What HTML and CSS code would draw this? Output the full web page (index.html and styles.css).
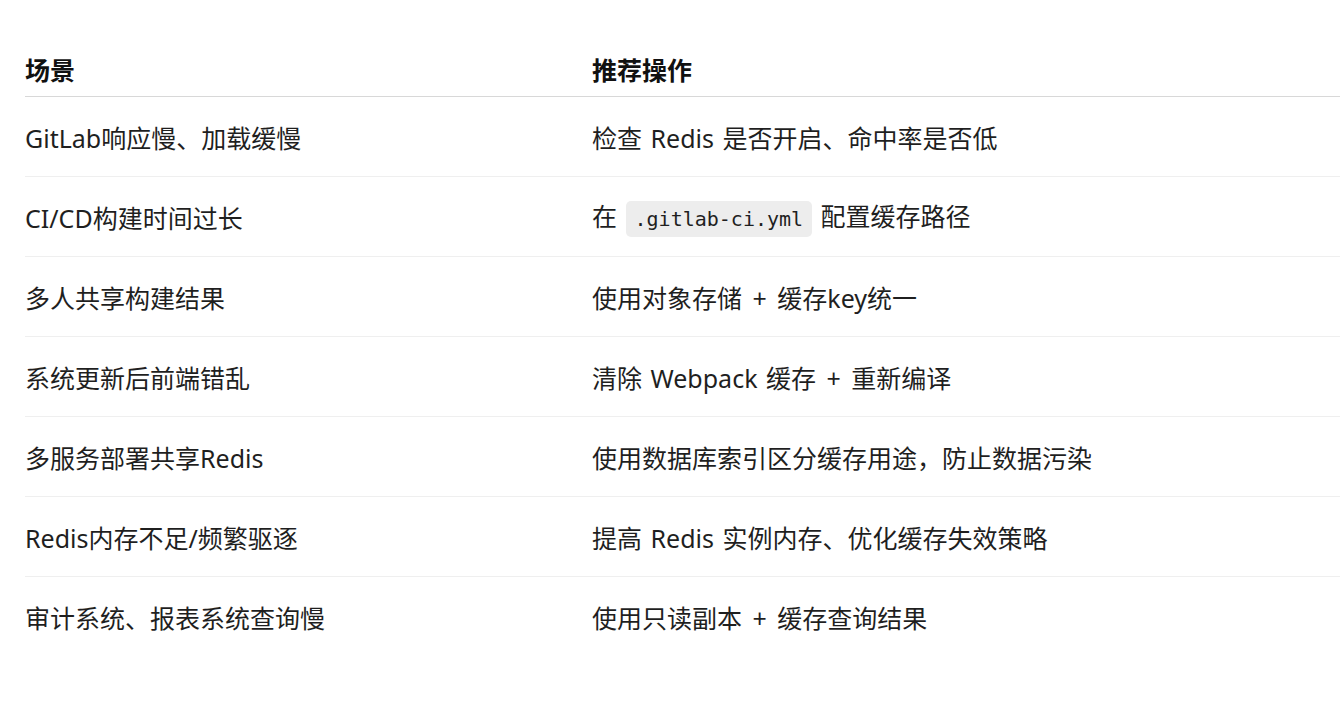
FILE: index.html
```html
<!DOCTYPE html>
<html lang="zh-CN">
<head>
<meta charset="utf-8">
<title>缓存场景</title>
<link rel="stylesheet" href="styles.css">
</head>
<body>
<div class="page">
  <table class="tbl">
    <colgroup>
      <col class="c1">
      <col class="c2">
    </colgroup>
    <thead>
      <tr>
        <th>场景</th>
        <th>推荐操作</th>
      </tr>
    </thead>
    <tbody>
      <tr><td>GitLab响应慢、加载缓慢</td><td>检查 Redis 是否开启、命中率是否低</td></tr>
      <tr><td>CI/CD构建时间过长</td><td>在 <code class="code">.gitlab-ci.yml</code> 配置缓存路径</td></tr>
      <tr><td>多人共享构建结果</td><td>使用对象存储 <span class="plus">+</span> 缓存key统一</td></tr>
      <tr><td>系统更新后前端错乱</td><td>清除 Webpack 缓存 <span class="plus">+</span> 重新编译</td></tr>
      <tr><td>多服务部署共享Redis</td><td>使用数据库索引区分缓存用途，防止数据污染</td></tr>
      <tr><td>Redis内存不足/频繁驱逐</td><td>提高 Redis 实例内存、优化缓存失效策略</td></tr>
      <tr><td>审计系统、报表系统查询慢</td><td>使用只读副本 <span class="plus">+</span> 缓存查询结果</td></tr>
    </tbody>
  </table>
</div>
</body>
</html>
```

FILE: styles.css
```css
html, body {
  margin: 0;
  padding: 0;
  background: #ffffff;
}

body {
  font-family: "Noto Sans", "Noto Sans CJK SC", sans-serif;
  font-size: 25px;
  color: #1f1f1f;
}

.page {
  padding: 44px 0 0 25px;
  overflow: hidden;
}

.tbl {
  border-collapse: collapse;
  width: 1340px;
  table-layout: fixed;
}

.c1 {
  width: 567px;
}

.tbl th {
  text-align: left;
  font-weight: 700;
  color: #111111;
  height: 52px;
  padding: 0;
  vertical-align: middle;
  border-bottom: 1px solid #d8d8d8;
  line-height: 30px;
}

.tbl td {
  height: 77px;
  padding: 2px 0 0 0;
  vertical-align: middle;
  border-bottom: 1px solid #efefef;
  line-height: 30px;
  white-space: nowrap;
  word-spacing: 2px;
}

.tbl tbody tr:last-child td {
  border-bottom: none;
}

.plus {
  display: inline-block;
  padding: 0 2px;
}

.code {
  font-family: "DejaVu Sans Mono", "Liberation Mono", monospace;
  font-size: 20px;
  word-spacing: 0;
  background: #ededed;
  border-radius: 5px;
  padding: 6px 9px;
  color: #1f1f1f;
}
```
